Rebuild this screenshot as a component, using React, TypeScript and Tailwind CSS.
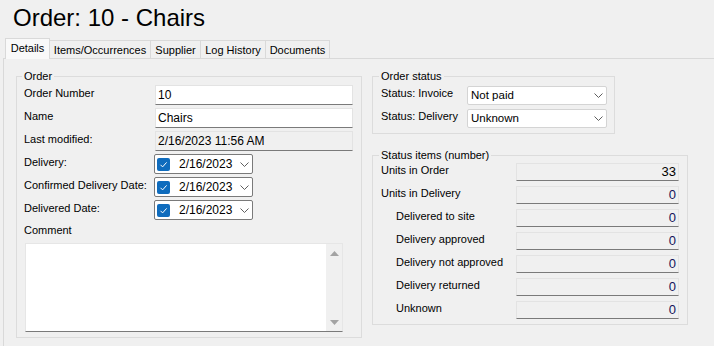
import type { ReactNode } from 'react'

const tabs = [
  { label: 'Details', w: 'w-[45px]', active: true },
  { label: 'Items/Occurrences', w: 'w-[101px]' },
  { label: 'Supplier', w: 'w-[50px]' },
  { label: 'Log History', w: 'w-[65px]' },
  { label: 'Documents', w: 'w-[64px]' },
]

const statusItems = [
  { label: 'Units in Order', value: '33', indent: false },
  { label: 'Units in Delivery', value: '0', indent: false },
  { label: 'Delivered to site', value: '0', indent: true },
  { label: 'Delivery approved', value: '0', indent: true },
  { label: 'Delivery not approved', value: '0', indent: true },
  { label: 'Delivery returned', value: '0', indent: true },
  { label: 'Unknown', value: '0', indent: true },
]

function Chevron() {
  return (
    <svg width="9" height="5" viewBox="0 0 9 5" className="shrink-0">
      <path d="M0.5 0.5 L4.5 4.5 L8.5 0.5" fill="none" stroke="#5f5f5f" strokeWidth="1" />
    </svg>
  )
}

function Group({ title, className, children }: { title: string; className: string; children: ReactNode }) {
  return (
    <fieldset className={`border border-[#dcdcdc] ${className}`}>
      <legend className="ml-[-2px] px-[2px] text-[11px] leading-[14px] text-black">{title}</legend>
      {children}
    </fieldset>
  )
}

function TextBox({ value, readOnly }: { value: string; readOnly?: boolean }) {
  return (
    <div
      className={`h-[20px] w-[198px] flex items-center pl-[2px] border border-[#e3e3e3] border-b-[#7a7a7a] text-[12px] text-black ${
        readOnly ? 'bg-[#f0f0f0]' : 'bg-white'
      }`}
    >
      {value}
    </div>
  )
}

function DatePicker({ value }: { value: string }) {
  return (
    <div className="h-[20px] w-[99px] -ml-px flex items-center bg-white border border-[#7a7a7a] rounded-[2px] pl-[2px] pr-[3px]">
      <div className="w-[13px] h-[13px] rounded-[2px] bg-[#0f6cbd] flex items-center justify-center">
        <svg width="13" height="13" viewBox="0 0 13 13">
          <path d="M3.5 6.8 L5.6 8.9 L9.6 4.4" fill="none" stroke="#ffffff" strokeWidth="1" />
        </svg>
      </div>
      <span className="ml-[9px] text-[12px] text-black">{value}</span>
      <div className="ml-auto">
        <Chevron />
      </div>
    </div>
  )
}

function Combo({ value }: { value: string }) {
  return (
    <div className="h-[19px] w-[140px] flex items-center bg-white border border-[#d4d4d4] rounded-[2px] pl-[3px] pr-[3px]">
      <span className="text-[11.5px] text-black">{value}</span>
      <div className="ml-auto">
        <Chevron />
      </div>
    </div>
  )
}

function FormRow({ label, children }: { label: string; children: ReactNode }) {
  return (
    <div className="flex">
      <div className="w-[131px] pt-[2px] text-[11px] leading-[13px]">{label}</div>
      {children}
    </div>
  )
}

export default function App() {
  return (
    <div className="w-[714px] h-[346px] overflow-hidden bg-[#f0f0f0] flex flex-col font-['Liberation_Sans',Arial,sans-serif] text-black">
      <div className="h-[38px] shrink-0 pl-[13px] pt-[4px] text-[24px] leading-[28px]">Order: 10 - Chairs</div>

      <div className="h-[21px] shrink-0 ml-[5px] flex items-end">
        {tabs.map((t) =>
          t.active ? (
            <div
              key={t.label}
              className={`${t.w} h-[21px] relative z-10 bg-[#f9f9f9] border border-b-0 border-[#d9d9d9] text-center pt-[3px] text-[11px] leading-[13px]`}
            >
              {t.label}
            </div>
          ) : (
            <div
              key={t.label}
              className={`${t.w} h-[19px] bg-[#f0f0f0] border border-l-0 border-[#d9d9d9] text-center pt-[3px] text-[11px] leading-[13px]`}
            >
              {t.label}
            </div>
          )
        )}
      </div>

      <div className="flex-1 -mt-px ml-[3px] border-l border-t border-[#d9d9d9] flex gap-[10px] pl-[12px] pt-[10px]">
        <Group title="Order" className="w-[346px] h-[269px] pl-[7px] pr-[8px]">
          <div className="flex flex-col gap-[3px] pt-[2px]">
            <FormRow label="Order Number">
              <TextBox value="10" />
            </FormRow>
            <FormRow label="Name">
              <TextBox value="Chairs" />
            </FormRow>
            <FormRow label="Last modified:">
              <TextBox value="2/16/2023 11:56 AM" readOnly />
            </FormRow>
            <FormRow label="Delivery:">
              <DatePicker value="2/16/2023" />
            </FormRow>
            <FormRow label="Confirmed Delivery Date:">
              <DatePicker value="2/16/2023" />
            </FormRow>
            <FormRow label="Delivered Date:">
              <DatePicker value="2/16/2023" />
            </FormRow>
            <div className="text-[11px] leading-[13px] pt-[1px]">Comment</div>
          </div>
          <div className="mt-[6px] ml-px w-[318px] h-[89px] bg-white border border-[#e6e6e6] border-b-[#7a7a7a] flex justify-end">
            <div className="w-[16px] bg-[#f0f0f0] flex flex-col items-center justify-between pt-[7px] pb-[6px]">
              <svg width="9" height="5" viewBox="0 0 9 5">
                <path d="M4.5 0 L9 5 L0 5 Z" fill="#a3a3a3" />
              </svg>
              <svg width="9" height="5" viewBox="0 0 9 5">
                <path d="M0 0 L9 0 L4.5 5 Z" fill="#a3a3a3" />
              </svg>
            </div>
          </div>
        </Group>

        <div className="flex flex-col gap-[14px]">
          <Group title="Order status" className="w-[243px] pl-[8px] pr-[7px] pb-[5px]">
            <div className="flex flex-col gap-[4px] pt-[3px]">
              <div className="flex">
                <div className="w-[86px] pt-[1px] text-[11px] leading-[13px]">Status: Invoice</div>
                <Combo value="Not paid" />
              </div>
              <div className="flex">
                <div className="w-[86px] pt-[1px] text-[11px] leading-[13px]">Status: Delivery</div>
                <Combo value="Unknown" />
              </div>
            </div>
          </Group>

          <Group title="Status items (number)" className="w-[316px] pl-[8px] pr-[8px] pb-[5px]">
            <div className="flex flex-col gap-[5px] pt-px">
              {statusItems.map((s) => (
                <div key={s.label} className="flex">
                  <div className={`w-[135px] text-[11px] leading-[13px] pt-px ${s.indent ? 'pl-[15px]' : ''}`}>{s.label}</div>
                  <div
                    className={`h-[18px] w-[163px] flex items-center justify-end pr-[2px] bg-[#f0f0f0] border border-[#e3e3e3] border-b-[#7a7a7a] text-[13px] ${
                      s.value === '0' ? 'text-[#14145a]' : 'text-black'
                    }`}
                  >
                    {s.value}
                  </div>
                </div>
              ))}
            </div>
          </Group>
        </div>
      </div>
    </div>
  )
}
